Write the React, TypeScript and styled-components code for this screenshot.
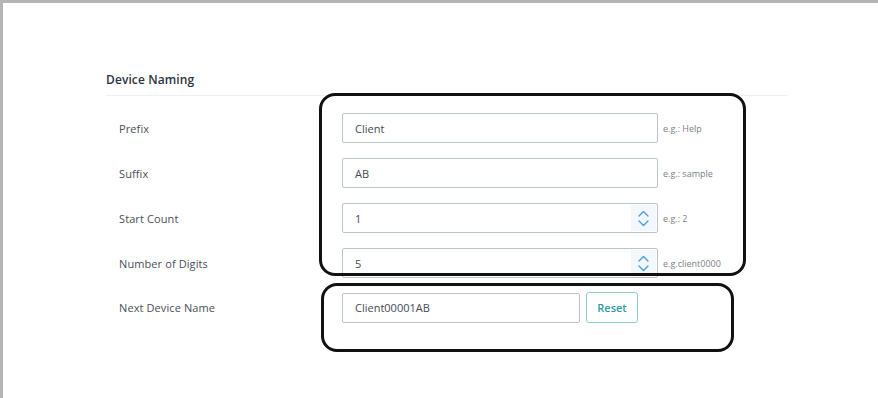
import styled, { createGlobalStyle } from "styled-components";

const GlobalStyle = createGlobalStyle`
  html, body {
    margin: 0;
    padding: 0;
    background: #ffffff;
  }
  * {
    box-sizing: border-box;
  }
`;

const Frame = styled.div`
  position: relative;
  width: 878px;
  height: 398px;
  overflow: hidden;
  background: #ffffff;
  border-top: 3px solid #b5b5b5;
  border-left: 3px solid #b5b5b5;
  font-family: "Open Sans", "Noto Sans", sans-serif;
`;

const Section = styled.section`
  width: 682px;
  margin: 0 0 0 103px;
  padding-top: 70px;
`;

const Heading = styled.h3`
  margin: 0;
  padding-bottom: 8px;
  font-size: 12px;
  font-weight: 600;
  color: #2d3340;
  line-height: 14px;
  letter-spacing: 0.1px;
  border-bottom: 1px solid #edf0f4;
`;

const Rows = styled.div`
  display: flex;
  flex-direction: column;
  gap: 15px;
  padding: 17px 0 0 13px;
`;

const Row = styled.div<{ $tight?: boolean }>`
  display: grid;
  grid-template-columns: 218px max-content max-content;
  justify-content: start;
  align-items: center;
  column-gap: 5px;
  height: 30px;
  margin-top: ${(p) => (p.$tight ? "-1px" : "0")};
`;

const Label = styled.label`
  font-size: 11px;
  color: #4a4f58;
  letter-spacing: 0.1px;
`;

const InputBox = styled.div<{ $width: number }>`
  position: relative;
  display: flex;
  align-items: center;
  width: ${(p) => p.$width}px;
  height: 30px;
  padding-left: 12px;
  border: 1px solid #bcc3cc;
  border-radius: 2px;
  font-size: 11px;
  color: #454a52;
  background: #ffffff;
`;

const Spinner = styled.div`
  position: absolute;
  right: 1px;
  top: 1px;
  bottom: 1px;
  width: 25px;
  display: flex;
  flex-direction: column;
  align-items: center;
  justify-content: center;
  gap: 3px;
  background: #f3f8fd;
`;

const Hint = styled.span`
  font-size: 9px;
  color: #7a7f87;
  white-space: nowrap;
`;

const Actions = styled.div`
  display: flex;
  align-items: center;
  gap: 6px;
`;

const ResetButton = styled.button`
  width: 52px;
  height: 31px;
  border: 1px solid #8ccfd4;
  border-radius: 3px;
  background: #ffffff;
  color: #2f9aa6;
  font-family: "Open Sans", "Noto Sans", sans-serif;
  font-size: 11px;
  font-weight: 600;
  padding: 0;
`;

const Callout = styled.div<{ $left: number; $top: number; $w: number; $h: number }>`
  position: absolute;
  left: ${(p) => p.$left}px;
  top: ${(p) => p.$top}px;
  width: ${(p) => p.$w}px;
  height: ${(p) => p.$h}px;
  border: 3px solid #111111;
  border-radius: 16px;
  pointer-events: none;
`;

const Chevron = ({ up }: { up?: boolean }) => (
  <svg width="11" height="7" viewBox="0 0 11 7">
    <path
      d={up ? "M1 6 L5.5 1.5 L10 6" : "M1 1 L5.5 5.5 L10 1"}
      fill="none"
      stroke="#4a9be0"
      strokeWidth="1.4"
      strokeLinecap="round"
      strokeLinejoin="round"
    />
  </svg>
);

const fields = [
  { label: "Prefix", value: "Client", hint: "e.g.: Help", spin: false },
  { label: "Suffix", value: "AB", hint: "e.g.: sample", spin: false },
  { label: "Start Count", value: "1", hint: "e.g.: 2", spin: true },
  { label: "Number of Digits", value: "5", hint: "e.g.client0000", spin: true },
];

export default function App() {
  return (
    <>
      <GlobalStyle />
      <Frame>
        <Section>
          <Heading>Device Naming</Heading>
          <Rows>
            {fields.map((f) => (
              <Row key={f.label}>
                <Label>{f.label}</Label>
                <InputBox $width={316}>
                  {f.value}
                  {f.spin && (
                    <Spinner>
                      <Chevron up />
                      <Chevron />
                    </Spinner>
                  )}
                </InputBox>
                <Hint>{f.hint}</Hint>
              </Row>
            ))}
            <Row $tight>
              <Label>Next Device Name</Label>
              <Actions>
                <InputBox $width={238}>Client00001AB</InputBox>
                <ResetButton>Reset</ResetButton>
              </Actions>
            </Row>
          </Rows>
        </Section>
        <Callout $left={316} $top={90} $w={427} $h={183} />
        <Callout $left={318} $top={280} $w={413} $h={69} />
      </Frame>
    </>
  );
}
